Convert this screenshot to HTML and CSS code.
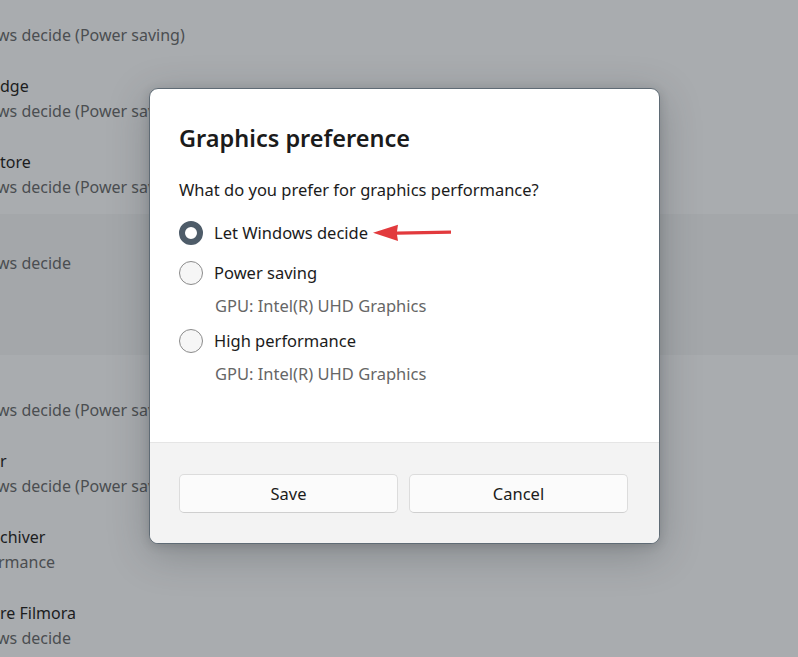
FILE: index.html
```html
<!DOCTYPE html>
<html lang="en">
<head>
<meta charset="utf-8">
<title>Graphics preference</title>
<link rel="stylesheet" href="styles.css">
</head>
<body>
<div class="backdrop">
  <div class="row row-first">
    <div class="name">&nbsp;</div>
    <div class="sub">ws decide (Power saving)</div>
  </div>
  <div class="row">
    <div class="name">dge</div>
    <div class="sub">ws decide (Power saving)</div>
  </div>
  <div class="row">
    <div class="name">tore</div>
    <div class="sub">ws decide (Power saving)</div>
  </div>
  <div class="row row-open">
    <div class="name">&nbsp;</div>
    <div class="sub">ws decide</div>
  </div>
  <div class="row row-after">
    <div class="name">&nbsp;</div>
    <div class="sub">ws decide (Power saving)</div>
  </div>
  <div class="row">
    <div class="name">r</div>
    <div class="sub">ws decide (Power saving)</div>
  </div>
  <div class="row">
    <div class="name">chiver</div>
    <div class="sub sub-tight">rmance</div>
  </div>
  <div class="row">
    <div class="name">re Filmora</div>
    <div class="sub">ws decide</div>
  </div>
</div>

<div class="dialog">
  <div class="dialog-body">
    <h1 class="title">Graphics preference</h1>
    <p class="question">What do you prefer for graphics performance?</p>
    <div class="option option-first">
      <span class="radio radio-checked"></span>
      <span class="label">Let Windows decide</span>
      <svg class="arrow" width="80" height="20" viewBox="0 0 80 20">
        <path d="M78 7.4 L24 8.4 L25 1.8 L0 9.8 L25 18 L24 11.8 L78 10.8 Z" fill="#e23a3d"/>
      </svg>
    </div>
    <div class="option">
      <span class="radio"></span>
      <span class="label">Power saving</span>
    </div>
    <div class="gpu">GPU: Intel(R) UHD Graphics</div>
    <div class="option option-third">
      <span class="radio"></span>
      <span class="label">High performance</span>
    </div>
    <div class="gpu">GPU: Intel(R) UHD Graphics</div>
  </div>
  <div class="dialog-footer">
    <button class="btn">Save</button>
    <button class="btn">Cancel</button>
  </div>
</div>
</body>
</html>
```

FILE: styles.css
```css
* { box-sizing: border-box; }

html, body {
  margin: 0;
  padding: 0;
  width: 798px;
  height: 657px;
  overflow: hidden;
}

body {
  background: #a9acaf;
  font-family: "Noto Sans", "Open Sans", sans-serif;
  position: relative;
}

.backdrop {
  display: flex;
  flex-direction: column;
  margin-top: -14px;
}

.row {
  height: 76px;
  padding-top: 12px;
  overflow: hidden;
  white-space: nowrap;
}

.row-open {
  height: 141px;
  background: #a4a7aa;
}

.row-after {
  margin-top: 6px;
}

.name {
  font-size: 16px;
  line-height: 25px;
  color: #1c1d1e;
}

.sub {
  font-size: 16px;
  line-height: 25px;
  color: #4b4e51;
  margin-left: -3px;
}

.sub-tight {
  margin-left: -2px;
}

.dialog {
  position: absolute;
  left: 149px;
  top: 88px;
  width: 511px;
  height: 456px;
  border: 1px solid #5f6b75;
  border-radius: 9px;
  overflow: hidden;
  background: #ffffff;
  box-shadow: 0 10px 40px rgba(40, 45, 50, 0.28), 0 2px 10px rgba(40, 45, 50, 0.18);
  display: flex;
  flex-direction: column;
}

.dialog-body {
  flex: 1;
  padding: 32px 29px 0 29px;
}

.title {
  margin: 0;
  font-size: 23.5px;
  line-height: 34px;
  font-weight: 600;
  color: #1b1b1b;
}

.question {
  margin: 23px 0 0 0;
  font-size: 16.5px;
  line-height: 24px;
  color: #1b1b1b;
}

.option {
  display: flex;
  align-items: center;
  height: 32px;
  margin-top: 8px;
}

.option-first {
  margin-top: 15px;
}

.option-third {
  margin-top: 7px;
}

.radio {
  width: 24px;
  height: 24px;
  border-radius: 50%;
  border: 1px solid #8b8b8b;
  background: #f6f6f6;
  flex: none;
}

.radio-checked {
  border: 6.5px solid #4e5c69;
  background: #ffffff;
}

.label {
  margin-left: 11px;
  font-size: 16.5px;
  line-height: 24px;
  color: #1b1b1b;
}

.arrow {
  margin-left: 5px;
  flex: none;
}

.gpu {
  margin-top: 5px;
  margin-left: 36px;
  font-size: 16.5px;
  line-height: 24px;
  color: #666666;
}

.dialog-footer {
  height: 101px;
  flex: none;
  background: #f3f3f3;
  border-top: 1px solid #e5e5e5;
  padding: 31px 29px 0 29px;
  display: flex;
  gap: 11px;
}

.btn {
  width: 219px;
  height: 39px;
  border: 1px solid #dcdcdc;
  border-bottom-color: #cfcfcf;
  border-radius: 5px;
  background: #fbfbfb;
  font-family: "Noto Sans", "Open Sans", sans-serif;
  font-size: 16.5px;
  color: #1b1b1b;
  padding: 0;
}
```
